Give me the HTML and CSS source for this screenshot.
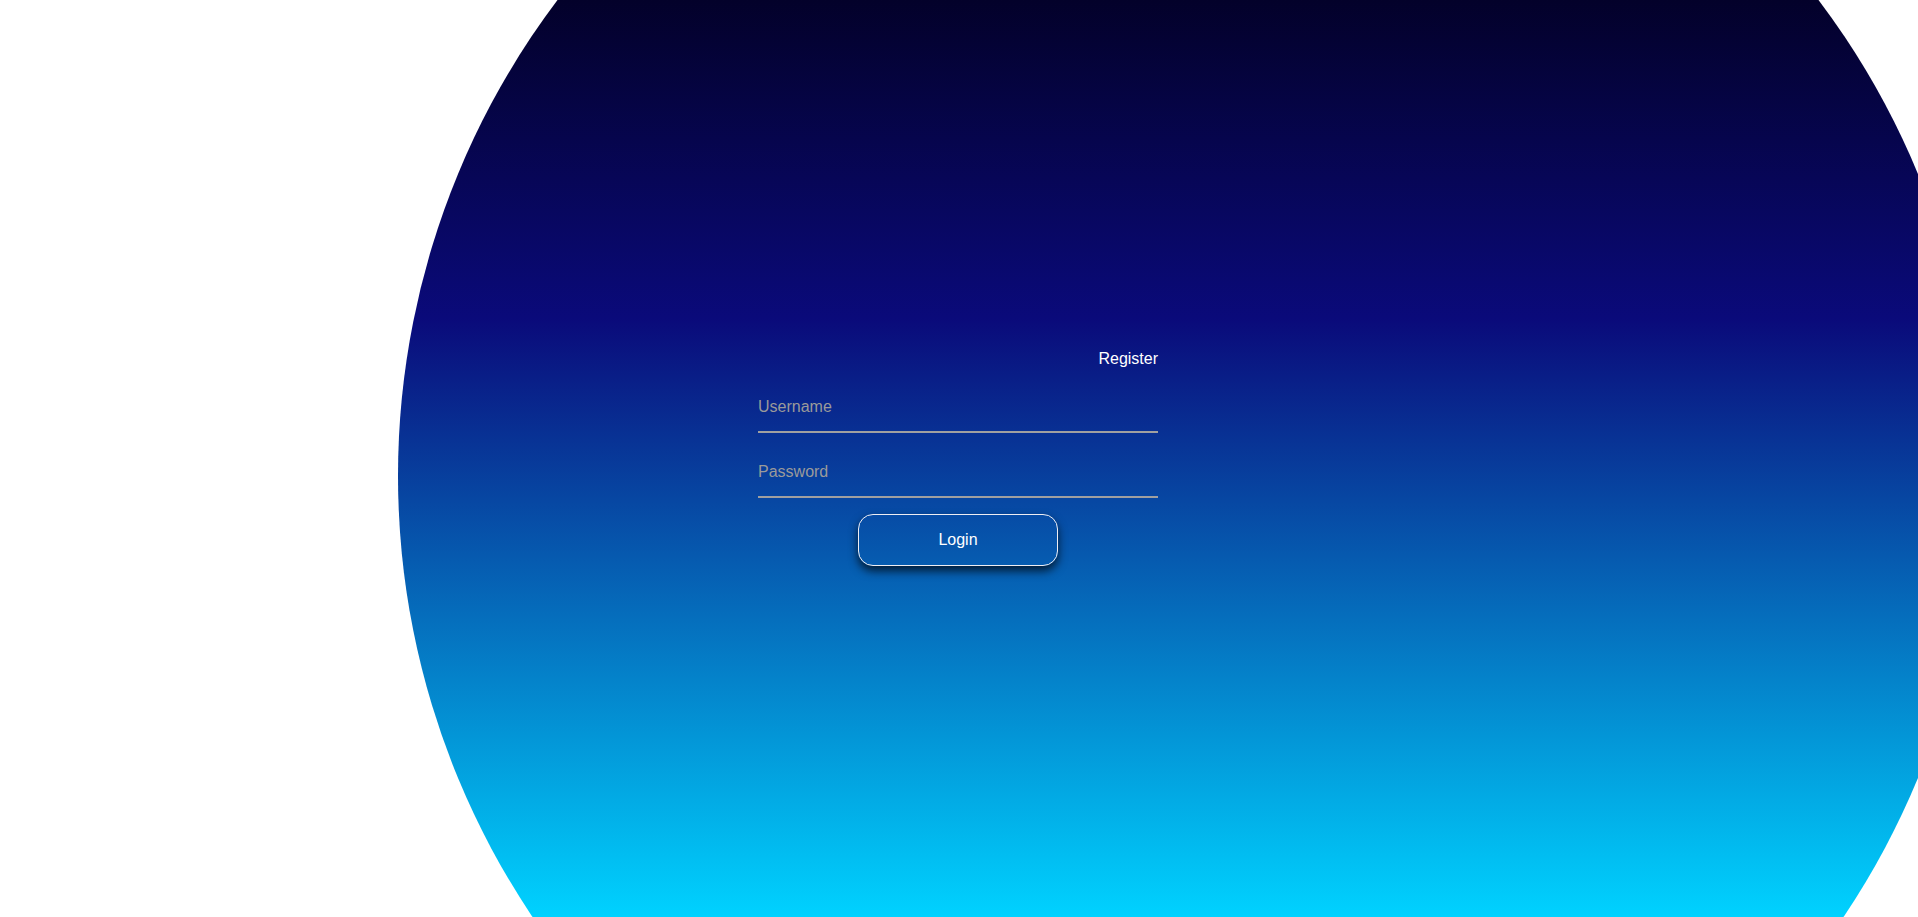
FILE: index.html
```html
<!DOCTYPE html>
<html lang="en">
<head>
<meta charset="utf-8">
<title>Login</title>
<link rel="stylesheet" href="styles.css">
</head>
<body>
<div class="page">
  <div class="orb"></div>
  <form class="login-form" onsubmit="return false;">
    <a class="register-link" href="#">Register</a>
    <input class="field field-user" type="text" placeholder="Username">
    <input class="field field-pass" type="password" placeholder="Password">
    <button class="login-btn" type="submit">Login</button>
  </form>
</div>
</body>
</html>
```

FILE: styles.css
```css
html, body {
  margin: 0;
  padding: 0;
  height: 100%;
  background: #ffffff;
  overflow: hidden;
}

.page {
  position: relative;
  height: 100vh;
  display: flex;
  align-items: center;
  justify-content: center;
  font-family: "Liberation Sans", Arial, sans-serif;
  overflow: hidden;
}

.orb {
  position: absolute;
  left: 398px;
  top: -314px;
  width: 1580px;
  height: 1580px;
  border-radius: 50%;
  background: linear-gradient(to bottom,
    #000010 0px,
    #03012a 314px,
    #0a0a7a 632px,
    #00d2ff 1231px,
    #00dcff 1580px);
  z-index: 0;
}

.login-form {
  position: relative;
  z-index: 1;
  width: 400px;
  display: flex;
  flex-direction: column;
  margin-right: 2px;
  margin-bottom: 1px;
}

.register-link {
  align-self: flex-end;
  color: #ffffff;
  text-decoration: none;
  font-size: 16px;
  line-height: 18px;
  margin-bottom: 14px;
}

.field {
  box-sizing: border-box;
  display: block;
  width: 100%;
  height: 51px;
  padding: 0;
  margin: 0;
  border: none;
  border-bottom: 2px solid #a0a0a0;
  background: transparent;
  color: #ffffff;
  font-family: "Liberation Sans", Arial, sans-serif;
  font-size: 16px;
  outline: none;
}

.field::placeholder {
  color: #9a9a9a;
  opacity: 1;
}

.field-pass {
  margin-top: 14px;
}

.login-btn {
  align-self: center;
  box-sizing: border-box;
  width: 200px;
  height: 52px;
  margin-top: 16px;
  border: 1px solid #eeeef4;
  border-radius: 15px;
  background: transparent;
  color: #ffffff;
  font-family: "Liberation Sans", Arial, sans-serif;
  font-size: 16px;
  box-shadow: 0 5px 10px rgba(0, 0, 0, 0.7);
  cursor: pointer;
}
```
